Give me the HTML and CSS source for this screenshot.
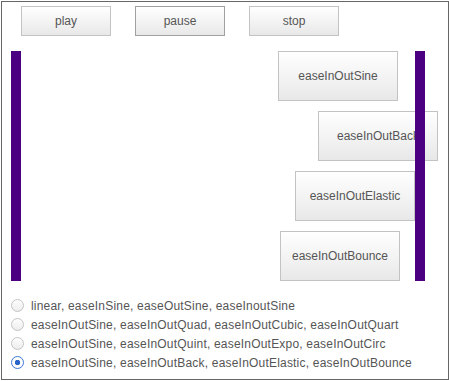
FILE: index.html
```html
<!DOCTYPE html>
<html lang="en">
<head>
  <meta charset="UTF-8">
  <title>Easing Demo</title>
  <link rel="stylesheet" href="styles.css">
</head>
<body>
  <div class="frame">
    <div class="controls">
      <button class="btn">play</button>
      <button class="btn active">pause</button>
      <button class="btn">stop</button>
    </div>

    <div class="track">
      <div class="bar bar-left"></div>
      <div class="bar bar-right"></div>
      <div class="box" style="margin-left: 267px">easeInOutSine</div>
      <div class="box" style="margin-left: 307px">easeInOutBack</div>
      <div class="box" style="margin-left: 284px">easeInOutElastic</div>
      <div class="box" style="margin-left: 269px">easeInOutBounce</div>
    </div>

    <div class="options">
      <label class="option"><input type="radio" name="ease"> linear, easeInSine, easeOutSine, easeInoutSine</label>
      <label class="option"><input type="radio" name="ease"> easeInOutSine, easeInOutQuad, easeInOutCubic, easeInOutQuart</label>
      <label class="option"><input type="radio" name="ease"> easeInOutSine, easeInOutQuint, easeInOutExpo, easeInOutCirc</label>
      <label class="option"><input type="radio" name="ease" checked> easeInOutSine, easeInOutBack, easeInOutElastic, easeInOutBounce</label>
    </div>
  </div>
</body>
</html>
```

FILE: styles.css
```css
body {
  margin: 0;
  font-family: "Liberation Sans", Arial, sans-serif;
  font-size: 12px;
  color: #555;
  background-color: #fff;
}

.frame {
  margin: 1px 0 0 1px;
  width: 446px;
  height: 377px;
  border: 1px solid #666;
  overflow: hidden;
}

.controls {
  display: flex;
  gap: 24px;
  margin: 4px 0 0 19px;
}

.btn,
.box {
  border: 1px solid #c3c3c3;
  background: linear-gradient(#ffffff, #e8e8e8);
  color: #555;
  font-family: "Liberation Sans", Arial, sans-serif;
  font-size: 12px;
}

.btn {
  width: 90px;
  height: 30px;
  padding: 0;
}

.btn.active {
  border-color: #a0a0a0;
}

.track {
  position: relative;
  width: 414px;
  height: 230px;
  margin: 15px 0 0 9px;
  display: flex;
  flex-direction: column;
  gap: 10px;
}

.bar {
  position: absolute;
  top: 0;
  width: 10px;
  height: 230px;
  background-color: #4b0082;
  z-index: 1;
}

.bar-left {
  left: 0;
}

.bar-right {
  right: 0;
}

.box {
  box-sizing: border-box;
  width: 120px;
  height: 50px;
  flex: none;
  display: flex;
  align-items: center;
  justify-content: center;
  white-space: nowrap;
}

.options {
  margin: 15px 0 0 9px;
  letter-spacing: 0.2px;
}

.option {
  display: flex;
  align-items: center;
  height: 19px;
  white-space: nowrap;
}

.option input {
  appearance: none;
  box-sizing: border-box;
  width: 13px;
  height: 13px;
  margin: 0 7px 0 0;
  border: 1px solid #c4c4c4;
  border-radius: 50%;
  background: linear-gradient(#fdfdfd, #ededed);
}

.option input:checked {
  border-color: #3b78d6;
  background: radial-gradient(circle, #2a66c8 0 2.5px, #fff 3px);
}
```
